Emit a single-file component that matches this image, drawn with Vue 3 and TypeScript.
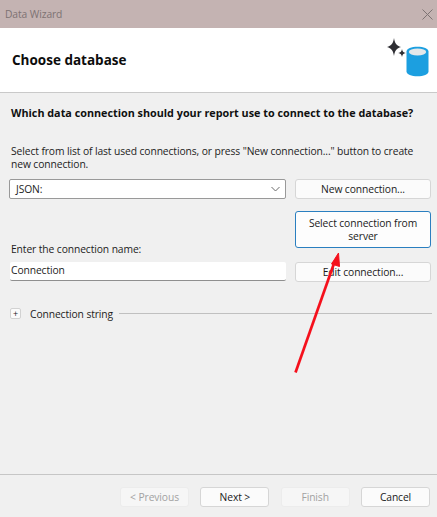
<script setup lang="ts">
const footerButtons: { label: string; kind: string }[] = [
  { label: '< Previous', kind: 'disabled' },
  { label: 'Next >', kind: '' },
  { label: 'Finish', kind: 'disabled' },
  { label: 'Cancel', kind: '' },
]
</script>

<template>
  <div class="wizard">
    <div class="titlebar">
      <span class="title-text">Data Wizard</span>
      <svg class="close" width="11" height="11" viewBox="0 0 11 11">
        <path d="M.5.5l10 10M10.500.5l-10 10" stroke="#7d7373" stroke-width="1" fill="none" />
      </svg>
    </div>
    <div class="header">
      <h1>Choose database</h1>
      <svg class="db-icon" width="44" height="44" viewBox="0 0 44 44">
        <path d="M8 0c.9 5.500 2.500 7.700 7 9-4.500 1.300-6.100 3.500-7 9-.9-5.500-2.500-7.700-7-9 4.500-1.300 6.100-3.500 7-9z" fill="#2e2e33" />
        <path d="M16 11c.4 2.400 1.200 3.300 3.800 4-2.600.7-3.400 1.600-3.800 4-.4-2.400-1.200-3.300-3.800-4 2.600-.7 3.400-1.600 3.800-4z" fill="#2e2e33" />
        <path d="M20.500 13.500c0-3 5-4.800 11-4.800s11 1.800 11 4.800v20c0 3-5 4.800-11 4.800s-11-1.800-11-4.800z" fill="#1c9fe0" />
        <ellipse cx="31.500" cy="14" rx="8.700" ry="3.400" fill="#e4e8ea" />
      </svg>
    </div>
    <div class="body">
      <p class="question">Which data connection should your report use to connect to the database?</p>
      <p class="hint">Select from list of last used connections, or press "New connection..." button to create new connection.</p>
      <div class="row combo-row">
        <div class="combo">
          <span>JSON:</span>
          <svg width="9" height="6" viewBox="0 0 9 6">
            <path d="M.5 1l4 4 4-4" stroke="#6a6a6a" fill="none" />
          </svg>
        </div>
        <button class="btn side">New connection...</button>
      </div>
      <div class="row server-row">
        <label class="name-label">Enter the connection name:</label>
        <button class="btn side focused">Select connection from server</button>
      </div>
      <div class="row name-row">
        <div class="name-input">Connection</div>
        <button class="btn side">Edit connection...</button>
      </div>
      <div class="expander">
        <span class="plus">+</span>
        <span class="exp-label">Connection string</span>
        <span class="rule"></span>
      </div>
    </div>
    <div class="footer">
      <button
        v-for="b in footerButtons"
        :key="b.label"
        class="btn foot"
        :class="b.kind"
      >{{ b.label }}</button>
    </div>
    <svg class="arrow" width="437" height="517" viewBox="0 0 437 517">
      <path d="M295.500 372.500L334.500 262" stroke="#f5101c" stroke-width="2.700" fill="none" />
      <path d="M338.500 253L331.500 264 339.500 266.500z" fill="#f5101c" stroke="#f5101c" stroke-width="1" />
    </svg>
  </div>
</template>

<style scoped>
.wizard {
  position: relative;
  width: 437px;
  height: 517px;
  display: flex;
  flex-direction: column;
  background: #f0f0f0;
  font-family: "Open Sans", "Noto Sans", sans-serif;
  font-size: 10.300px;
  letter-spacing: -0.1px;
  color: #1c1c1c;
  overflow: hidden;
}
.titlebar {
  height: 28px;
  flex: none;
  background: #c4b3b2;
  display: flex;
  align-items: center;
  justify-content: space-between;
  padding: 0 4px 0 5px;
}
.title-text {
  color: #7d7273;
}
.header {
  height: 65px;
  flex: none;
  background: #fff;
  border-bottom: 1px solid #c9c9c9;
  box-sizing: border-box;
  display: flex;
  align-items: center;
  justify-content: space-between;
  padding: 0 7px 0 12px;
}
.header h1 {
  margin: 0;
  font-size: 13.500px;
  font-weight: 700;
  letter-spacing: 0;
  color: #0c0c0c;
}
.db-icon {
  align-self: flex-start;
  margin-top: 10px;
}
.body {
  flex: 1;
  padding: 0 6px 0 9px;
  display: flex;
  flex-direction: column;
  min-height: 0;
}
.question {
  margin: 12px 0 0 2px;
  font-weight: 700;
  font-size: 10.800px;
  letter-spacing: 0;
  color: #101010;
  white-space: nowrap;
  line-height: 15px;
}
.hint {
  margin: 25px 0 0 2px;
  line-height: 13px;
  width: 415px;
}
.row {
  display: flex;
  justify-content: space-between;
}
.combo-row {
  margin-top: 8px;
}
.combo {
  width: 277px;
  height: 20px;
  box-sizing: border-box;
  background: #fff;
  border: 1px solid #999;
  border-radius: 2px;
  display: flex;
  align-items: center;
  justify-content: space-between;
  padding: 0 5px 0 6px;
}
.btn {
  font: inherit;
  letter-spacing: inherit;
  color: #1a1a1a;
  background: #fbfbfb;
  border: 1px solid #d6d6d6;
  border-radius: 3px;
  box-sizing: border-box;
  padding: 0 0 1px;
}
.side {
  width: 136px;
  height: 20px;
  flex: none;
}
.server-row {
  margin-top: 12px;
  align-items: flex-end;
}
.name-label {
  margin: 0 0 -8px 2px;
  line-height: 13px;
}
.focused {
  height: 37px;
  background: #fdfdfd;
  border: 1.500px solid #2a7fc0;
  padding: 1px 8px 0;
  line-height: 13px;
}
.name-row {
  margin-top: 14px;
}
.name-input {
  width: 276px;
  height: 19px;
  margin-left: 1px;
  box-sizing: border-box;
  background: #fff;
  border-bottom: 1.500px solid #8f8f8f;
  border-radius: 2px;
  padding-left: 1px;
  line-height: 17px;
}
.expander {
  margin-top: 25px;
  margin-left: 1px;
  margin-right: -1px;
  display: flex;
  align-items: center;
  height: 13px;
}
.plus {
  width: 11px;
  height: 11px;
  box-sizing: border-box;
  border: 1px solid #d2d2d2;
  border-radius: 2px;
  background: #fbfbfb;
  display: flex;
  align-items: center;
  justify-content: center;
  font-size: 9px;
  line-height: 9px;
}
.exp-label {
  margin-left: 9px;
}
.rule {
  flex: 1;
  height: 1px;
  background: #c0c0c0;
  margin-left: 6px;
}
.footer {
  flex: none;
  height: 43px;
  box-sizing: border-box;
  border-top: 1px solid #c6c6c6;
  display: flex;
  justify-content: flex-end;
  gap: 11.330px;
  padding: 12px 7px 0 0;
}
.foot {
  width: 69px;
  height: 20px;
}
.foot.disabled {
  color: #a2a2a2;
  background: #f6f6f6;
  border-color: #ececec;
}
.arrow {
  position: absolute;
  top: 0;
  left: 0;
  pointer-events: none;
}
</style>
